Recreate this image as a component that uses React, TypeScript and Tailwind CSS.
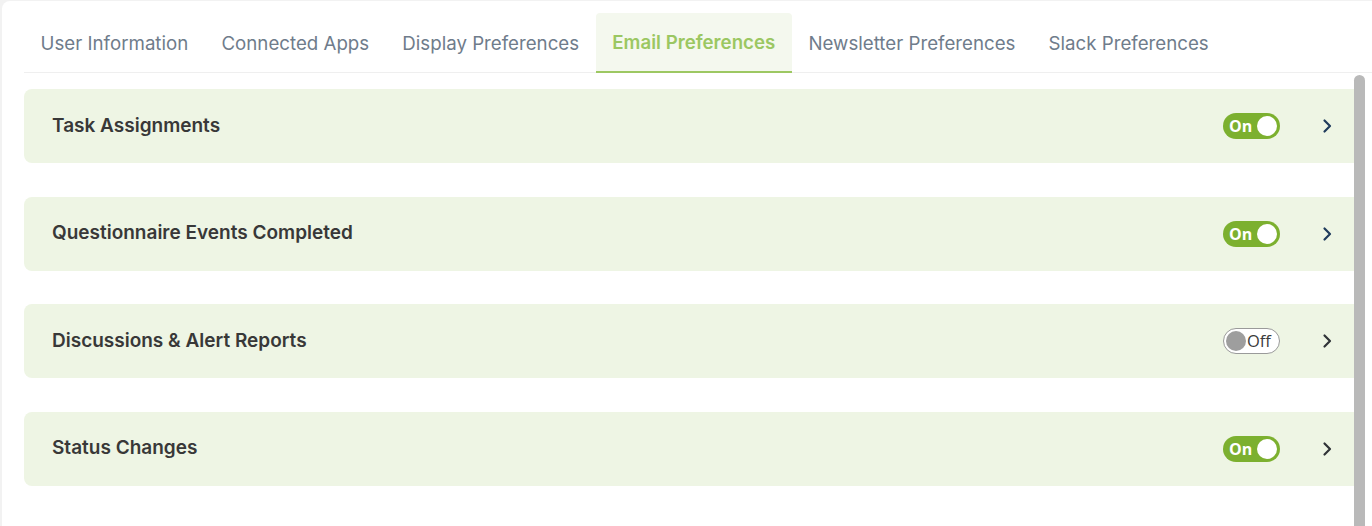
import React from "react";

const tabs = [
  "User Information",
  "Connected Apps",
  "Display Preferences",
  "Email Preferences",
  "Newsletter Preferences",
  "Slack Preferences",
];

const rows: { title: string; on: boolean; chevron: string }[] = [
  { title: "Task Assignments", on: true, chevron: "#1f3b5c" },
  { title: "Questionnaire Events Completed", on: true, chevron: "#1f3b5c" },
  { title: "Discussions & Alert Reports", on: false, chevron: "#2f3337" },
  { title: "Status Changes", on: true, chevron: "#2f3337" },
];

function Toggle({ on }: { on: boolean }) {
  if (on) {
    return (
      <div className="flex h-[26px] w-[57px] items-center justify-between rounded-full bg-[#7cb02f] pl-[6px] pr-[3px]">
        <span className="text-[16px] font-bold leading-none text-white [font-family:'Open_Sans','Liberation_Sans',sans-serif]">
          On
        </span>
        <span className="h-[20px] w-[20px] rounded-full bg-white" />
      </div>
    );
  }
  return (
    <div className="flex h-[26px] w-[57px] items-center rounded-full border border-[#9a9a9a] bg-white pl-[2px]">
      <span className="h-[20px] w-[20px] rounded-full bg-[#9e9e9e]" />
      <span className="ml-[1px] text-[16.5px] leading-none text-[#3a3a3a] [font-family:'Open_Sans','Liberation_Sans',sans-serif]">
        Off
      </span>
    </div>
  );
}

function Chevron({ color }: { color: string }) {
  return (
    <svg width="14" height="16" viewBox="0 0 14 16" fill="none">
      <path d="M4.5 2.5 L10 8 L4.5 13.5" stroke={color} strokeWidth="2.2" strokeLinecap="round" strokeLinejoin="round" />
    </svg>
  );
}

export default function App() {
  return (
    <div className="h-[526px] w-[1372px] overflow-hidden bg-[#f2f2f2] pl-[2px] pt-[1px] [font-family:Inter,'Noto_Sans',sans-serif]">
      <div className="flex h-full flex-col rounded-tl-[8px] bg-white pl-[22px]">
        <div className="mt-[12px] flex border-b border-[#efefef]">
          {tabs.map((t) => {
            const active = t === "Email Preferences";
            return (
              <div
                key={t}
                className={
                  active
                    ? "-mb-px flex h-[60px] items-center rounded-t-[4px] border-b-2 border-[#9dc862] bg-[#f4f8ee] px-[16.6px] pt-[3px] text-[18.7px] font-semibold text-[#9bc762]"
                    : "flex h-[59px] items-center px-[16.6px] pt-[4px] text-[18.7px] text-[#6f7c8b]"
                }
              >
                {t}
              </div>
            );
          })}
        </div>
        <div className="flex min-h-0 flex-1 pr-[7px]">
          <div className="flex flex-1 flex-col gap-[33.5px] pt-[16px]">
            {rows.map((r) => (
              <div
                key={r.title}
                className="flex h-[74px] shrink-0 items-center rounded-l-[8px] bg-[#eef5e4] pl-[28px] pr-[20px]"
              >
                <div className="flex-1 text-[19px] font-semibold text-[#383838]">{r.title}</div>
                <Toggle on={r.on} />
                <div className="ml-[40px] flex w-[14px] items-center">
                  <Chevron color={r.chevron} />
                </div>
              </div>
            ))}
          </div>
          <div className="w-[11px] pt-[2px]">
            <div className="h-full rounded-t-full bg-[#b9b9b9]" />
          </div>
        </div>
      </div>
    </div>
  );
}
